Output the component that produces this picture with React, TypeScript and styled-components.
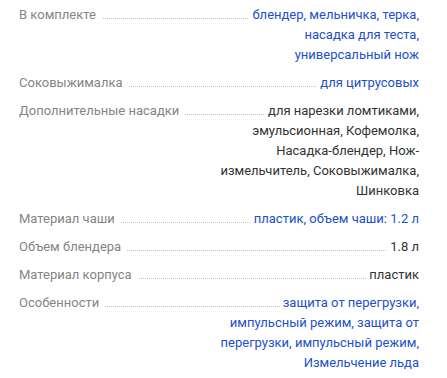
import React from "react";
import styled, { createGlobalStyle } from "styled-components";

type Spec = {
  label: string;
  value: string;
  link?: boolean;
};

const specs: Spec[] = [
  {
    label: "В комплекте",
    value: "блендер, мельничка, терка, насадка для теста, универсальный нож",
    link: true,
  },
  { label: "Соковыжималка", value: "для цитрусовых", link: true },
  {
    label: "Дополнительные насадки",
    value:
      "для нарезки ломтиками, эмульсионная, Кофемолка, Насадка-блендер, Нож-измельчитель, Соковыжималка, Шинковка",
  },
  { label: "Материал чаши", value: "пластик, объем чаши: 1.2 л", link: true },
  { label: "Объем блендера", value: "1.8 л" },
  { label: "Материал корпуса", value: "пластик" },
  {
    label: "Особенности",
    value:
      "защита от перегрузки, импульсный режим, защита от перегрузки, импульсный режим, Измельчение льда",
    link: true,
  },
];

const GlobalStyle = createGlobalStyle`
  body {
    margin: 0;
    background: #fff;
    font-family: Roboto, "Noto Sans", Arial, sans-serif;
  }
`;

const SpecList = styled.dl`
  margin: 0;
  padding: 5px 28px 0 19px;
  display: flex;
  flex-direction: column;
  gap: 8px;
  font-size: 13px;
  line-height: 20px;
`;

/* dotted leader drawn as a background on the first line of the row */
const SpecRow = styled.div`
  display: flex;
  align-items: flex-start;
  justify-content: space-between;
  background-image: linear-gradient(to right, #c4c4c4 1px, transparent 1px);
  background-size: 2px 1px;
  background-repeat: repeat-x;
  background-position: 0 13px;
`;

const Label = styled.dt`
  flex: none;
  padding-right: 6px;
  background: #fff;
  color: #858585;
  white-space: nowrap;
`;

const Value = styled.dd`
  margin: 0;
  max-width: 200px;
  text-align: right;
`;

const ValueText = styled.span<{ $link?: boolean }>`
  padding-left: 3px;
  background: #fff;
  color: ${(p) => (p.$link ? "#2150cc" : "#333")};
`;

const App: React.FC = () => (
  <>
    <GlobalStyle />
    <SpecList>
      {specs.map((s) => (
        <SpecRow key={s.label}>
          <Label>{s.label}</Label>
          <Value>
            <ValueText $link={s.link}>{s.value}</ValueText>
          </Value>
        </SpecRow>
      ))}
    </SpecList>
  </>
);

export default App;
